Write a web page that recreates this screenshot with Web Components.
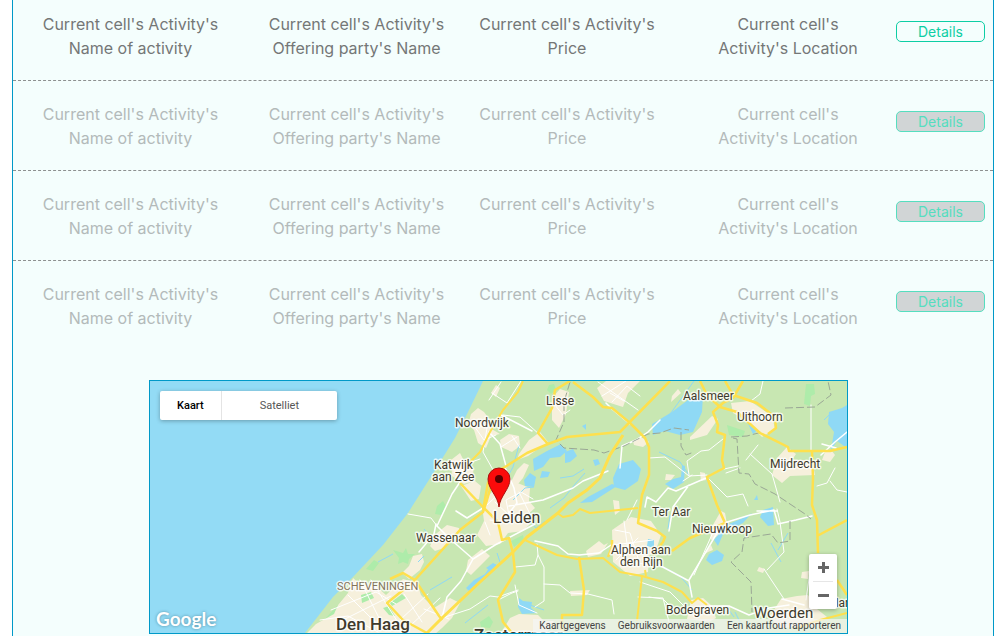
<!DOCTYPE html>
<html lang="nl">
<head>
<meta charset="utf-8">
<title>Activities</title>
<style>
  body {
    margin: 0;
    background: #fff;
    color: #747777;
    font-family: Inter, "Noto Sans", sans-serif;
    font-size: 16px;
    line-height: 24px;
  }
</style>
</head>
<body>
<page-frame>
  <activity-list></activity-list>
  <area-map></area-map>
</page-frame>

<script>
class PageFrame extends HTMLElement {
  constructor() {
    super();
    const template = document.createElement('template');
    template.innerHTML = `
      <style>
        :host {
          display: block;
          box-sizing: border-box;
          min-height: 100vh;
          margin: 0 11px 0 12px;
          border: solid #0099c8;
          border-width: 0 1px;
          background: #f4fefd;
        }
      </style>
      <slot></slot>
    `;
    this.attachShadow({ mode: 'open' });
    this.shadowRoot.appendChild(template.content.cloneNode(true));
  }
}
customElements.define('page-frame', PageFrame);

class OutlineButton extends HTMLElement {
  constructor() {
    super();
    const template = document.createElement('template');
    template.innerHTML = `
      <style>
        :host { display: block; }
        button {
          display: block;
          box-sizing: border-box;
          width: 100%;
          height: 21px;
          padding: 1px 0 0;
          border: 1px solid #0dcea4;
          border-radius: 5px;
          background: transparent;
          color: #0dcea4;
          font: inherit;
          font-size: 14px;
          line-height: 18px;
          text-align: center;
        }
        button:disabled {
          border-color: #55debf;
          background: #d1d5d6;
          color: #55debf;
        }
      </style>
      <button type="button"><slot></slot></button>
    `;
    this.attachShadow({ mode: 'open' });
    this.shadowRoot.appendChild(template.content.cloneNode(true));
  }

  connectedCallback() {
    this.shadowRoot.querySelector('button').disabled = this.hasAttribute('disabled');
  }
}
customElements.define('outline-button', OutlineButton);

class ActivityList extends HTMLElement {
  constructor() {
    super();
    const template = document.createElement('template');
    template.innerHTML = `
      <style>
        :host { display: block; }
        table, tbody { display: block; }
        tr {
          display: grid;
          grid-template-columns: 235fr 217fr 204fr 227fr 89fr;
          padding: 21px 8px 20px 0;
          border-bottom: 1px dashed #8d9090;
        }
        tr:first-child { padding-top: 12px; }
        tr:last-child { border-bottom: 0; }
        tr.muted { color: #b3baba; }
        td {
          padding: 0 10px;
          text-align: center;
        }
        td.location { padding: 0 30px 0 41px; }
        td.action { padding: 9px 0 0; }
      </style>
      <table><tbody></tbody></table>
    `;
    this.attachShadow({ mode: 'open' });
    this.shadowRoot.appendChild(template.content.cloneNode(true));
  }

  connectedCallback() {
    const body = this.shadowRoot.querySelector('tbody');
    const prefix = "Current cell's Activity's ";

    // only the first cell is live, the rest are placeholders
    for (let i = 0; i < 4; i++) {
      const row = document.createElement('tr');
      if (i > 0) row.className = 'muted';
      row.innerHTML = `
        <td>${prefix}Name of activity</td>
        <td>${prefix}Offering party's Name</td>
        <td>${prefix}Price</td>
        <td class="location">${prefix}Location</td>
        <td class="action"><outline-button ${i > 0 ? 'disabled' : ''}>Details</outline-button></td>
      `;
      body.appendChild(row);
    }
  }
}
customElements.define('activity-list', ActivityList);

class MapTypeControl extends HTMLElement {
  constructor() {
    super();
    const template = document.createElement('template');
    template.innerHTML = `
      <style>
        :host {
          display: flex;
          border-radius: 2px;
          background: #fff;
          box-shadow: 0 1px 4px rgba(0, 0, 0, 0.3);
        }
        button {
          height: 29px;
          padding: 0 17px;
          border: 0;
          background: none;
          color: #565656;
          font: 11px Roboto, sans-serif;
        }
        button[aria-pressed="true"] {
          color: #000;
          font-weight: 500;
        }
        button + button {
          padding: 0 38px;
          border-left: 1px solid #e4e4e4;
        }
      </style>
      <button type="button" aria-pressed="true">Kaart</button>
      <button type="button" aria-pressed="false">Satelliet</button>
    `;
    this.attachShadow({ mode: 'open' });
    this.shadowRoot.appendChild(template.content.cloneNode(true));
  }
}
customElements.define('map-type-control', MapTypeControl);

class ZoomControl extends HTMLElement {
  constructor() {
    super();
    const template = document.createElement('template');
    template.innerHTML = `
      <style>
        :host {
          display: block;
          width: 28px;
          border-radius: 2px;
          background: #fff;
          box-shadow: 0 1px 4px rgba(0, 0, 0, 0.3);
        }
        button {
          display: grid;
          place-items: center;
          width: 100%;
          height: 27px;
          padding: 0;
          border: 0;
          background: none;
        }
        hr {
          height: 1px;
          margin: 0 4px;
          border: 0;
          background: #e6e6e6;
        }
      </style>
      <button type="button" aria-label="Inzoomen">
        <svg width="11" height="11"><path d="M4 0h3v4h4v3H7v4H4V7H0V4h4z" fill="#666"/></svg>
      </button>
      <hr>
      <button type="button" aria-label="Uitzoomen">
        <svg width="11" height="11"><path d="M0 4h11v3H0z" fill="#666"/></svg>
      </button>
    `;
    this.attachShadow({ mode: 'open' });
    this.shadowRoot.appendChild(template.content.cloneNode(true));
  }
}
customElements.define('zoom-control', ZoomControl);

class AreaMap extends HTMLElement {
  constructor() {
    super();
    const template = document.createElement('template');
    template.innerHTML = `
      <style>
        :host {
          display: grid;
          grid-template-columns: 136fr 699fr 145fr;
          margin-top: 30px;
        }
        .map {
          position: relative;
          grid-column: 2;
          box-sizing: border-box;
          height: 254px;
          border: 1px solid #0099c8;
          overflow: hidden;
          font-family: Roboto, sans-serif;
        }
        .tiles {
          display: block;
          width: 100%;
          height: 100%;
          background: #93dbf5;
        }
        .labels {
          fill: #3f3a2c;
          stroke: #fff;
          stroke-opacity: 0.75;
          stroke-width: 3px;
          stroke-linejoin: round;
          paint-order: stroke;
          font-size: 12px;
        }
        .labels .city { font-size: 16px; }
        .labels .town { font-size: 15px; }
        .labels .capital { font-size: 17px; font-weight: 500; }
        .labels .district { font-size: 11px; fill: #84745a; }
        map-type-control { position: absolute; top: 10px; left: 10px; }
        zoom-control { position: absolute; right: 10px; bottom: 24px; }
        .logo {
          position: absolute;
          left: 6px;
          bottom: 2px;
          color: #fff;
          font: bold 19px/24px Lato, sans-serif;
          text-decoration: none;
          text-shadow: 0 0 3px rgba(40, 90, 110, 0.6);
        }
        .legal {
          position: absolute;
          right: 0;
          bottom: 0;
          display: flex;
          gap: 12px;
          padding: 0 6px;
          background: rgba(245, 245, 245, 0.7);
          font-size: 10px;
          line-height: 14px;
        }
        .legal a, .legal button {
          padding: 0;
          border: 0;
          background: none;
          color: #444;
          font: inherit;
          text-decoration: none;
        }
      </style>
      <div class="map">
        <svg class="tiles" viewBox="150 381 697 252" preserveAspectRatio="xMidYMid slice">
          <!-- land -->
          <path fill="#c8e7b2" d="M483 381L470 408L455 438L432 475L413 505L408 513L383 545L353 577L333 597L305 633H847V381Z"/>
          <!-- parks -->
          <g fill="#aeecaa">
            <path d="M393 550l10 3 3-5 2 6 7 0-6 5-1 5-5-2-5 2 1-6z"/>
            <path d="M437 506l6-5 3 5-5 9-6-1z"/>
            <path d="M366 569l8-9 5 3-6 8z"/>
            <path d="M347 595l-22 24 8 2 16-17z"/>
            <path d="M806 384l8 0 1 10-4 2-1 10-6-2z"/>
            <path d="M549 385l5-1 2 6-5 4-4-4z"/>
            <path d="M480 622l9-6 4 6-3 6-9-1z"/>
            <path d="M479 435l5-2 3 6-5 3z"/>
            <path d="M727 425l18 6-2 6-14-2z"/>
          </g>
          <!-- built-up areas -->
          <g fill="#f6f0dc">
            <path d="M353 578l8 7 15 1 10 9 17-16 14 4 4 12 13 13 16-10 10 5-8 15-10 10-7 6H306l10-10 18-10 4-9 10-12z"/>
            <path d="M413 556l9-2 2 8-4 8-11 9-7-6 7-7z"/>
            <path d="M437 533l10-8 12 3 1 8-9 5-7 7-9 3-5-5z"/>
            <path d="M471 414l7-6 6 4 6 8 0 8 10 6-9 2-5 12-8-5-4-13-6-5z"/>
            <path d="M500 440l9-6 10 2 1 10-8 6-11-5z"/>
            <path d="M529 440l11-8 8 10-20 14-11 4 2-6z"/>
            <path d="M491 393l5-8 4 3-4 9z"/>
            <path d="M451 460l9-7 3 6 10 9 1 13-10 3-12-8z"/>
            <path d="M461 486l14-5 6 5-2 13-8 2z"/>
            <path d="M482 506l8-12 15-15 10 3 15 6-1 13 6 7-9 8 5 7-8 8-15 2-8 11-14 2-9-11 7-14z"/>
            <path d="M517 470l7-7 5 2-6 13-10 12-4-4z"/>
            <path d="M468 560l14-11 8 7-19 19-5-4z"/>
            <path d="M552 398l8-9 9 3-3 22-7 14-7-8z"/>
            <path d="M597 388l9-7h34l-12 12-5 14-19-6z"/>
            <path d="M612 530l19-13 20 4 10 14-5 15-7 6-1 16-18 4-17-14z"/>
            <path d="M586 551l13-10 5 4 4-2-7 11-13 3z"/>
            <path d="M633 441l8-4 8 5-6 5-9-2z"/>
            <path d="M672 396l6-7 3 4-10 9z"/>
            <path d="M690 437l22-21 6 3-11 16-17 5z"/>
            <path d="M731 403l19-2 22 15 3 13-13 8-18-18-11-6z"/>
            <path d="M777 458l10-11 9 7-4 6 20 0 3 15-25 1-8 7-10-8z"/>
            <path d="M825 452l7-1 3 4-5 7-8-2z"/>
            <path d="M700 472l5 1 1 7-5 1z"/>
            <path d="M721 511l4 2 2 11-8 11-8 5-1-10z"/>
            <path d="M705 554l6-9 2 5-5 2z"/>
            <path d="M781 599l16-3 11-1 9 14 10 8-15 9-34 2-8-12z"/>
            <path d="M691 600l12-2 9 8 4 12-7 4-22-3z"/>
            <path d="M759 567l6 2-2 4-6-2z"/>
            <path d="M802 572l7-1-1 8-7-1z"/>
            <path d="M519 614l19 1 6 6 10 0-7 12h-46l9-15z"/>
            <path d="M570 591l20-1-3 5-16 1z"/>
            <path d="M613 500l6 1 1 10-5 4z"/>
            <path d="M666 474l9 1-4 5-6 0z"/>
          </g>
          <!-- parks inside the towns -->
          <g fill="#aeecaa">
            <path d="M361 595l10-3 3 6-12 5z"/>
            <path d="M390 603l12-9 4 4-14 8z"/>
            <path d="M511 541l12-6 1 5-10 7z"/>
            <path d="M383 608l6-2 6 10-6-1z"/>
          </g>
          <!-- lakes and canals -->
          <g fill="#8fd9f5">
            <path d="M652 424l20-12 16-12 15-5-1 17-9 20-13 3-15-4-12 4z"/>
            <path d="M613 478l6-14 14-4 8 9-3 12-13 9-11-3z"/>
            <path d="M665 484l8-5 8-2 1-12 3 1-1 16-11 7z"/>
            <path d="M533 459l14-8 14-7 6 7-7 6-10 1-7 9-9 4z"/>
            <path d="M524 480l6-7 6 4-2 10-9-1z"/>
            <path d="M565 452l8-3 4 7-7 6-5 1z"/>
            <path d="M593 460l5-1 2 5-5 2z"/>
            <path d="M542 471l8 1-2 5-8 1z"/>
            <path d="M466 588l8-8 11-6 6-9 3 3-5 8-9 7-10 9z"/>
            <path d="M486 568l7-5 4 2-6 6z"/>
            <path d="M519 598l4 3 9 1-1 6 6 5-15 1-4-7z"/>
            <path d="M709 554l8-4 7 5-2 6-10 4-6-5z"/>
            <path d="M729 524l14-6 9-5-9 10-11 5z"/>
            <path d="M763 510l10-3 1 18-6 1-8-9z"/>
            <path d="M714 540l4-5 4-10 4 2-8 19z"/>
            <path d="M829 412l13-4 5-3v43l-10-7-6 9 3-18-6-8z"/>
            <path d="M747 422l11 8-5 4z"/>
            <path d="M648 539l6 1 0 8-7-2z"/>
            <path d="M754 500l3-5 1 5z"/>
            <path d="M582 426l4-2 0 6z"/>
            <path d="M580 503l8-6 24-13 5 2-25 16z"/>
          </g>
          <g fill="none" stroke="#8fd9f5" stroke-width="1">
            <path d="M378 562l15-8M424 529l4 5M501 489l12-22 6-22M513 500l12-12 9-1M528 520l8 8 9-7M550 508l14-10 12-15 9-10M560 478l13-2 11-7M418 562l6-6M430 590l22-13M465 623l23-18"/>
            <path d="M500 562l-3-9M659 452l21 10 9 13M670 515l-2 14M694 381l-29 40M824 420l9-9M771 543l10 19M778 550l10-17"/>
            <path d="M726 606l8 11M735 612l7 14M530 605l14 5M650 560l30 16 12 14"/>
          </g>
          <!-- local roads -->
          <g fill="none" stroke="#fff" stroke-linejoin="round" stroke-linecap="round">
            <g stroke-width="1">
              <path d="M408 514l23 4 6 8M348 595l35 35M331 610l45-18 20 12M341 621l50-25M360 580l20 40M371 580l28 44M320 620l28-4 30 16M400 620l28-26M410 626l30-28M404 594l18 28M424 609l25 10"/>
              <path d="M487 428l-4 24 14 25 9 14M503 415l17 2 20 18M470 420l14 20 12-5M489 400l12-18M492 393l15 10 14-22M456 476l10-12 14-5M501 447l16-10M520 448l-8-12"/>
              <path d="M487 505l23-22M490 520l15 2 28-4M495 502l17 16 20-4M510 520l-4-20 15-8 12 7M519 492l11 22M490 535l-5-13"/>
              <path d="M515 567l20-2 3-10-1-11M538 555l6 12v34l-9 6M544 584l16 1 10 8 18 1 24 6 2 14M442 618l28-9 20-13 8 1 20-7M515 585l4 20 18 8M498 600l14-7 6-2"/>
              <path d="M598 382l40 28M602 396l24-15M612 402l15-16 13 10M610 393l14 8M555 405l8 10 7-5M649 458l16-1 24 19 18-1M689 475l-2-14 14-10 8-1 14-11M683 481l9-6M750 454l22 20 8 28M811 405v46M763 381l-3 13-9 7M724 469l14-3M746 460l12-15M835 468l-8 15-10 3M830 481l7 9 10 2M707 477l20 20 16-3 5 12M767 570l17-18-4-30-3-13M764 569l20 30M810 572l-4 28M637 500l-10 20M615 530l15 3 8 25M624 521l4 30M613 545l40-5M616 560l22-22M636 563l17 2"/>
              <path d="M638 597l25 1 6 24M649 597l14 2 12 12M640 582l30 10 14 14M740 468l-14 5M694 575l20-45"/>
            </g>
            <g stroke-width="1.5">
              <path d="M483 508l-16 10-11-7M437 526l12 12 24 21 22-14 40-21M436 524l-2 10-15 18M437 526l15-32 8-12M473 559l-12 22-14 16-5 21M501 415l31 16M489 432l11 12 6 22-3 11M509 506l34-6 30-12 10-7 25-10M535 541l5 1 18 4 10 8 12 1M505 467l9 21 3 15-12 15M579 555l20-2 12-8M620 468l2-22 14-6 12-8 12-12M630 424l-18-15-6-6M706 478l-30 13-8-3-12 14-9-5-2 10M689 485l-16 22-4 24M655 508l14 2M750 515l-26 8M750 515l24-5 4 14 18-4 16-4M757 511l20 0M709 606l20 0 20 9 20-7 20-3M659 565l30 16 3 16M782 599l22 6M721 526l-14 24-18 30M821 455l14-13 12-10M822 444l14 4"/>
            </g>
          </g>
          <!-- province borders -->
          <path fill="none" stroke="#9aa795" stroke-width="1" stroke-dasharray="8 3" d="M570 382l-6 20 0 20-8 18 8 8 30 2 10 3 20-7 24-12 12-1 14-5 15 2M681 432v14l5 9 8-3M733 438l4 1 2 34 10 1 6 10 20 10 30 20 6 5M731 437l16-1 15-4M785 408l30-1 16-12-3-14M790 521v20l-12 2-7-9-27 4-2 14-11 10 20 20 1 30"/>
          <!-- main roads -->
          <g fill="none" stroke="#fee04d" stroke-width="2.5" stroke-linejoin="round">
            <path d="M523 381L518 392L503 410L490 432L480 452L470 462" stroke-width="2"/>
            <path d="M570 381L555 390L552 408L538 433L548 444"/>
            <path d="M573 382L593 397L603 407L612 408L630 423L645 438L649 447V475L642 495L638 523L657 531L665 537L663 542L653 555"/>
            <path d="M483 510L488 483L493 473L505 467L527 453L548 444L567 437L620 432L670 381"/>
            <path d="M623 435L610 455L600 478L587 490L568 503L558 513L527 537L513 552L480 582L442 618L427 633" stroke-width="3"/>
            <path d="M494 475L487 500L483 512L460 530L433 560L413 582L387 603L403 620L427 633"/>
            <path d="M390 579L403 573L415 580L427 598L437 613L442 620"/>
            <path d="M460 483L483 507L498 522L502 540L509 538L513 553L515 572L498 600L503 622L512 633"/>
            <path d="M557 513L563 517L573 515L580 509L590 513L638 508" stroke-width="2"/>
            <path d="M525 540L557 555L577 559L603 558L620 572L642 576L663 582L682 592L692 603L698 598L707 605" stroke-width="2"/>
            <path d="M579 557L584 590L582 615H562V633M612 540V547L608 557"/>
            <path d="M743 381L733 398L723 403L713 412L718 425L717 432L725 435L722 460L724 468L707 477L717 505L725 523L690 538L672 551"/>
            <path d="M700 381L707 395L720 407L737 412L760 433L788 447L789 451H830L847 447"/>
            <path d="M725 381L733 395L757 403L775 417L776 428L768 434"/>
            <path d="M812 451L813 478L812 505L817 520L818 553M817 536L847 520M837 580L847 595"/>
            <path d="M642 576L637 621M645 570L646 576M797 628L820 620L847 613" stroke-width="2"/>
          </g>
          <!-- place names -->
          <g class="labels">
            <text x="546" y="405">Lisse</text>
            <text x="683" y="400">Aalsmeer</text>
            <text x="737" y="421">Uithoorn</text>
            <text x="455" y="427">Noordwijk</text>
            <text x="434" y="469">Katwijk</text>
            <text x="432" y="481">aan Zee</text>
            <text x="770" y="468">Mijdrecht</text>
            <text x="652" y="516">Ter Aar</text>
            <text x="692" y="533">Nieuwkoop</text>
            <text x="416" y="542">Wassenaar</text>
            <text x="611" y="554">Alphen aan</text>
            <text x="620" y="566">den Rijn</text>
            <text x="666" y="614">Bodegraven</text>
            <text x="830" y="607">Harmelen</text>
            <text class="district" x="337" y="590">SCHEVENINGEN</text>
            <text class="town" x="754" y="618">Woerden</text>
            <text class="city" x="493" y="523">Leiden</text>
            <text class="capital" x="336" y="630">Den Haag</text>
            <text class="capital" x="474" y="641">Zoetermeer</text>
          </g>
          <!-- marker -->
          <path fill="#fb0b0b" stroke="#a8100c" stroke-width="1" d="M499 507C498 496 488 489 488 479A11 11 0 0 1 510 479C510 489 500 496 499 507Z"/>
          <circle cx="499" cy="479" r="4" fill="#590000"/>
        </svg>
        <map-type-control></map-type-control>
        <zoom-control></zoom-control>
        <a class="logo" href="#">Google</a>
        <div class="legal">
          <button type="button">Kaartgegevens</button>
          <a href="#">Gebruiksvoorwaarden</a>
          <a href="#">Een kaartfout rapporteren</a>
        </div>
      </div>
    `;
    this.attachShadow({ mode: 'open' });
    this.shadowRoot.appendChild(template.content.cloneNode(true));
  }
}
customElements.define('area-map', AreaMap);
</script>
</body>
</html>
